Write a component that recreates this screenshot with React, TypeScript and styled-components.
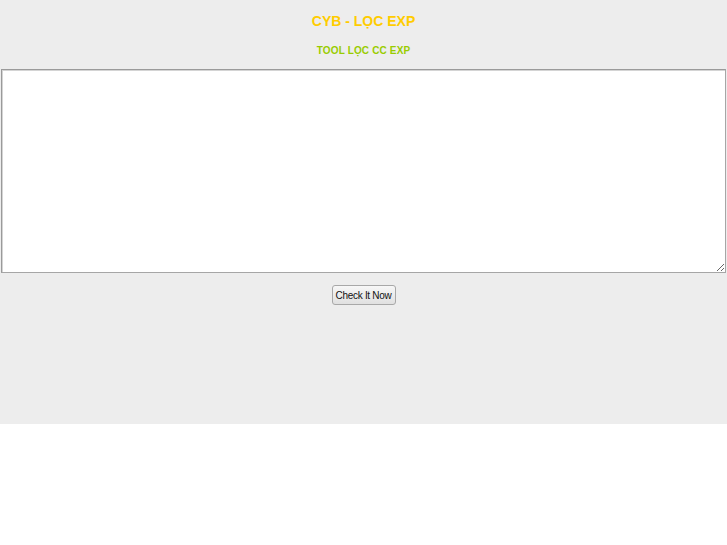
import React from "react";
import styled, { createGlobalStyle } from "styled-components";

const Global = createGlobalStyle`
  html, body { margin: 0; padding: 0; background: #ffffff; }
  body { font-family: "Liberation Sans", Arial, sans-serif; }
`;

const Page = styled.div`
  background: #ededed;
  height: 424px;
  padding-top: 13px;
  box-sizing: border-box;
  display: flex;
  flex-direction: column;
  align-items: center;
`;

const Title = styled.div`
  font-size: 14px;
  line-height: 16px;
  font-weight: bold;
  color: #ffcc00;
  text-align: center;
`;

const Subtitle = styled.div`
  margin-top: 15px;
  font-size: 10px;
  line-height: 13px;
  font-weight: bold;
  letter-spacing: 0.15px;
  color: #99cc00;
  text-align: center;
`;

const Input = styled.textarea`
  margin: 12px 1px 0 1px;
  width: calc(100% - 2px);
  height: 204px;
  box-sizing: border-box;
  border: 1px solid #a6a6a6;
  border-top-color: #9a9a9a;
  border-left-color: #9a9a9a;
  box-shadow: inset 1px 1px 0 #d4d4d4;
  background: #ffffff;
  resize: both;
  padding: 2px;
  font-family: "Liberation Mono", monospace;
  font-size: 13px;
  outline: none;
`;

const Button = styled.button`
  margin-top: 12px;
  height: 20px;
  width: 64px;
  padding: 0;
  white-space: nowrap;
  border: 1px solid #a8a8a8;
  border-radius: 3px;
  background: linear-gradient(#f7f7f7, #e0e0e0);
  font-family: "Liberation Sans", Arial, sans-serif;
  font-size: 10px;
  letter-spacing: -0.3px;
  color: #111;
  cursor: pointer;
`;

export default function App() {
  return (
    <>
      <Global />
      <Page>
        <Title>CYB - LỌC EXP</Title>
        <Subtitle>TOOL LỌC CC EXP</Subtitle>
        <Input />
        <Button>Check It Now</Button>
      </Page>
    </>
  );
}
